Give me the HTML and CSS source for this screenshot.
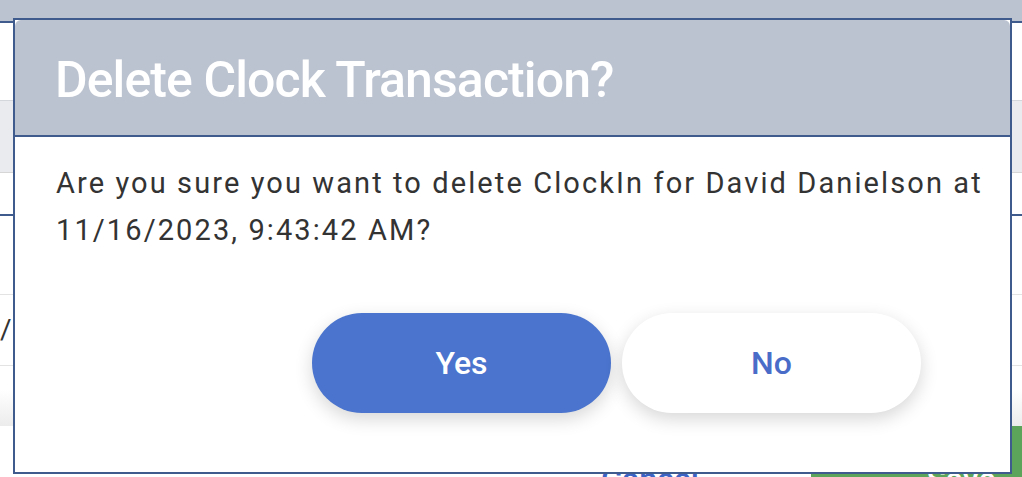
FILE: index.html
```html
<!DOCTYPE html>
<html lang="en">
<head>
<meta charset="utf-8">
<title>Delete Clock Transaction</title>
<link rel="stylesheet" href="styles.css">
</head>
<body>
<div class="page">
  <div class="topbar"></div>
  <div class="topline"></div>
  <div class="blank-a"></div>
  <div class="band"></div>
  <div class="blank-b"></div>
  <div class="blueline"></div>
  <div class="row row-1"></div>
  <div class="row row-2"><span class="cell-text">/16/2023</span></div>
  <div class="row-3"></div>
  <div class="footer">
    <div class="btn-cancel">Cancel</div>
    <div class="btn-save">Save</div>
  </div>
</div>

<div class="modal">
  <div class="modal-header">
    <h1 class="modal-title">Delete Clock Transaction?</h1>
  </div>
  <div class="modal-body">
    <p class="modal-text">Are you sure you want to delete ClockIn for David Danielson at 11/16/2023, 9:43:42 AM?</p>
    <div class="modal-actions">
      <button class="btn btn-yes">Yes</button>
      <button class="btn btn-no">No</button>
    </div>
  </div>
</div>
</body>
</html>
```
FILE: styles.css
```css
* { box-sizing: border-box; }
html, body {
  margin: 0;
  padding: 0;
  width: 1022px;
  height: 477px;
  overflow: hidden;
  background: #ffffff;
  font-family: Roboto, "Liberation Sans", sans-serif;
}
.page {
  position: relative;
  width: 1022px;
  height: 477px;
  overflow: hidden;
}
.topbar { height: 21px; background: #bcc3d0; }
.topline { height: 2px; background: #3f5b8d; }
.blank-a { height: 77px; }
.band {
  height: 73px;
  background: #e9ebef;
  border-top: 1px solid #d4d7dc;
  border-bottom: 1px solid #d6d6d6;
}
.blank-b { height: 41px; }
.blueline { height: 2px; background: #3f5b8d; }
.row { border-bottom: 1px solid #e3e3e3; }
.row-1 { height: 79px; }
.row-2 {
  height: 71px;
  display: flex;
  align-items: center;
}
.cell-text {
  font-size: 28px;
  color: #333333;
  margin-left: 0;
  padding-bottom: 2px;
}
.row-3 {
  height: 60px;
  background: linear-gradient(to bottom, #ffffff 0px, #ffffff 23px, #ececec 60px);
}
.footer {
  display: flex;
  gap: 11px;
  padding-left: 500px;
  height: 106px;
}
.btn-cancel, .btn-save {
  flex: 0 0 300px;
  height: 106px;
  display: flex;
  align-items: center;
  justify-content: center;
  font-size: 32px;
  font-weight: 500;
}
.btn-cancel { background: #ffffff; color: #3d63c4; }
.btn-save { background: #5ba45a; color: #ffffff; }

.modal {
  position: absolute;
  left: 13px;
  top: 18px;
  width: 999px;
  height: 456px;
  background: #ffffff;
  border: 2px solid #3f5b8d;
}
.modal-header {
  background: #bcc3d0;
  border-bottom: 2px solid #3f5b8d;
  border-radius: 6px 6px 0 0;
  padding: 31px 38px 26px 40px;
}
.modal-title {
  margin: 0;
  font-size: 50px;
  line-height: 58px;
  font-weight: 500;
  letter-spacing: -0.9px;
  color: #ffffff;
}
.modal-body {
  padding: 23px 8px 0 41px;
}
.modal-text {
  margin: 0;
  font-size: 29px;
  line-height: 47px;
  letter-spacing: 2.1px;
  color: #333333;
}
.modal-actions {
  display: flex;
  justify-content: flex-end;
  gap: 11px;
  margin-top: 59px;
  padding-right: 81px;
}
.btn {
  width: 299px;
  height: 100px;
  border: none;
  border-radius: 50px;
  font-family: Roboto, "Liberation Sans", sans-serif;
  font-size: 32px;
  font-weight: 500;
  box-shadow: 0 6px 18px rgba(0, 0, 0, 0.16);
}
.btn-yes { background: #4a74cd; color: #ffffff; }
.btn-no { background: #ffffff; color: #4a6cc9; }
```
